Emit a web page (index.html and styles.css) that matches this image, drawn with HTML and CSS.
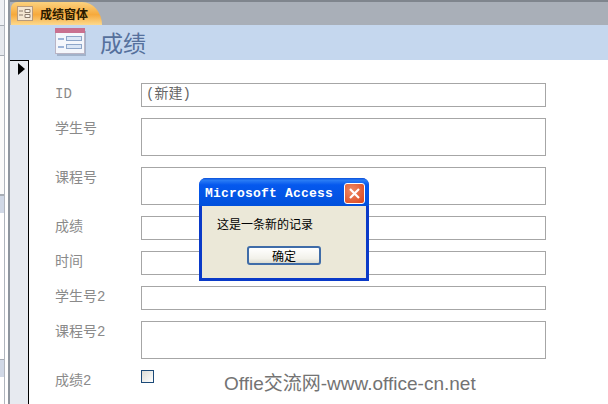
FILE: index.html
```html
<!DOCTYPE html>
<html lang="zh">
  <head>
    <meta charset="UTF-8" />
    <title>成绩窗体</title>
    <link rel="stylesheet" href="styles.css">
  </head>
  <body>
    <div class="nav-strip">
      <div class="nav-blocks">
        <div class="nav-block nav-a"></div>
        <div class="nav-block nav-b"></div>
        <div class="nav-block nav-c"></div>
        <div class="nav-block nav-d"></div>
        <div class="nav-block nav-e"></div>
        <div class="nav-block nav-d"></div>
        <div class="nav-block nav-f"></div>
      </div>
    </div>
    <div class="main">
      <div class="tab-bar">
        <div class="tab">
          <svg class="tab-icon" width="16" height="15" viewBox="0 0 16 15">
            <rect x="0.5" y="0.5" width="15" height="14" fill="#f3e6d2" stroke="#b89a7c" />
            <path d="M2 5h4M2 9h4" stroke="#8a7a6c" />
            <path d="M8 3.500h5v3h-5zM8 8.500h5v3h-5z" fill="#f8f1e6" stroke="#8a7a6c" />
          </svg>
          <span>成绩窗体</span>
        </div>
      </div>
      <div class="form-header">
        <svg class="form-icon" width="32" height="28" viewBox="0 0 32 28">
          <rect x="2" y="3" width="29" height="25" fill="#7f8ea5" opacity="0.5" />
          <rect x="0.500" y="0.500" width="29" height="25" fill="#f4f6fb" stroke="#b9b4c4" />
          <rect x="0" y="0" width="30" height="5" fill="#c9708f" />
          <path d="M3 11h6M3 19h6" stroke="#9db4d8" stroke-width="2" />
          <rect x="11.500" y="8.500" width="15" height="4" fill="#dbe6f5" stroke="#8ea6c9" />
          <rect x="11.500" y="16.500" width="15" height="4" fill="#dbe6f5" stroke="#8ea6c9" />
        </svg>
        <span class="form-title">成绩</span>
      </div>
      <div class="form-body">
        <div class="selector"><span class="arrow"></span></div>
        <div class="fields">
          <label class="row-label">ID</label>
          <div class="field h-short field-new">(新建)</div>
          <label class="row-label">学生号</label>
          <div class="field h-tall"></div>
          <label class="row-label">课程号</label>
          <div class="field h-tall"></div>
          <label class="row-label">成绩</label>
          <div class="field h-short"></div>
          <label class="row-label">时间</label>
          <div class="field h-short"></div>
          <label class="row-label">学生号2</label>
          <div class="field h-short"></div>
          <label class="row-label">课程号2</label>
          <div class="field h-tall"></div>
          <label class="row-label">成绩2</label>
          <div class="check"></div>
        </div>
      </div>
    </div>

    <div class="dialog">
      <div class="dialog-title">
        <span>Microsoft Access</span>
        <div class="close-btn">
          <svg width="13" height="13" viewBox="0 0 13 13">
            <path d="M2 2l9 9M11 2l-9 9" stroke="#fff" stroke-width="2.200" />
          </svg>
        </div>
      </div>
      <div class="dialog-body">
        <p>这是一条新的记录</p>
        <button class="ok-btn">确定</button>
      </div>
    </div>

    <div class="watermark">Offie交流网-www.office-cn.net</div>
  </body>
</html>
```

FILE: styles.css
```css
* {
  margin: 0;
  padding: 0;
  box-sizing: border-box;
}

body {
  width: 608px;
  height: 404px;
  overflow: hidden;
  position: relative;
  display: flex;
  background: #fff;
  font-family: "Noto Sans CJK SC", "Liberation Sans", sans-serif;
}

.nav-strip {
  width: 10px;
  height: 404px;
  background: #fff;
  border-right: 2px solid #8f969f;
}

.nav-blocks {
  width: 5px;
  height: 100%;
  display: flex;
  flex-direction: column;
  border-right: 1px solid #b0b5bd;
}

.nav-block {
  border-bottom: 1px solid #a7adb5;
}

.nav-a {
  height: 26px;
  background: #eef0f4;
}

.nav-b {
  height: 30px;
  background: #e6e9ee;
}

.nav-c {
  height: 139px;
  background: #fafafa;
}

.nav-d {
  height: 18px;
  background: #d0d8e6;
  border-top: 1px solid #a7adb5;
  border-bottom: 0;
}

.nav-e {
  height: 146px;
  background: #fff;
  border-bottom: 0;
}

.nav-f {
  flex: 1;
  background: #fff;
  border-bottom: 0;
}

.main {
  flex: 1;
  display: flex;
  flex-direction: column;
  min-width: 0;
}

.tab-bar {
  height: 25px;
  background: #a9afb8;
  border-top: 2px solid #7f858d;
  display: flex;
  align-items: flex-end;
}

.tab {
  width: 91px;
  height: 23px;
  margin-left: 1px;
  padding-left: 6px;
  display: flex;
  align-items: center;
  gap: 7px;
  font-size: 12px;
  font-weight: 700;
  color: #2a1a00;
  background: linear-gradient(#fbd27f, #f6a93c 55%, #fcd98e);
  border-radius: 6px 20px 0 0 / 6px 23px 0 0;
}

.form-header {
  height: 35px;
  background: #c5d7ee;
  display: flex;
  align-items: center;
  padding: 0 0 2px 45px;
}

.form-title {
  margin-left: 13px;
  font-size: 23px;
  line-height: 30px;
  color: #55709c;
}

.form-body {
  flex: 1;
  display: flex;
  min-height: 0;
}

.selector {
  width: 19px;
  background: #e7eaf0;
  border-top: 1px solid #000;
  border-right: 1px solid #000;
  padding: 2px 0 0 8px;
}

.arrow {
  display: block;
  width: 0;
  height: 0;
  border-left: 7px solid #000;
  border-top: 6px solid transparent;
  border-bottom: 6px solid transparent;
}

.fields {
  padding: 23px 0 0 26px;
  display: grid;
  grid-template-columns: 86px 405px;
  row-gap: 11px;
  align-content: start;
}

.row-label {
  padding-top: 2px;
  font-family: "Liberation Mono", "Noto Sans CJK SC", monospace;
  font-size: 14px;
  line-height: 19px;
  color: #8a8a8a;
}

.field {
  border: 1px solid #a6a6a6;
  background: #fff;
}

.field-new {
  font-family: "Liberation Mono", "Noto Sans CJK SC", monospace;
  font-size: 14px;
  line-height: 21px;
  padding-left: 4px;
  color: #666;
}

.h-short {
  height: 24px;
}

.h-tall {
  height: 38px;
}

.check {
  width: 13px;
  height: 13px;
  border: 1px solid #1c4a78;
  background: linear-gradient(135deg, #dcdcd6, #fff);
}

.dialog {
  position: absolute;
  left: 199px;
  top: 178px;
  width: 170px;
  height: 103px;
  background: #0a3ac8;
  border-radius: 7px 7px 0 0;
  padding: 0 3px 3px;
  display: flex;
  flex-direction: column;
}

.dialog-title {
  height: 28px;
  flex-shrink: 0;
  margin: 0 -3px;
  display: flex;
  align-items: center;
  justify-content: space-between;
  padding: 2px 4px 0 6px;
  border-radius: 7px 7px 0 0;
  background: linear-gradient(#0a4fd8, #2a7cf5 8%, #0558ee 25%, #0050dc);
  color: #fff;
  font-family: "Liberation Mono", monospace;
  font-size: 13px;
  letter-spacing: 0.2px;
  font-weight: 700;
  white-space: nowrap;
}

.close-btn {
  width: 21px;
  height: 21px;
  border: 1px solid #fff;
  border-radius: 3px;
  background: radial-gradient(circle at 35% 35%, #ee8a66, #d9431a);
  display: flex;
  align-items: center;
  justify-content: center;
}

.dialog-body {
  flex: 1;
  background: #ebe8d8;
  display: flex;
  flex-direction: column;
  align-items: center;
}

.dialog-body p {
  align-self: flex-start;
  margin: 9px 0 0 15px;
  font-size: 12px;
  line-height: 17px;
  color: #000;
}

.ok-btn {
  margin-top: 14px;
  width: 74px;
  height: 19px;
  font-family: inherit;
  font-size: 12px;
  line-height: 15px;
  color: #000;
  background: linear-gradient(#fff, #f2f1ea 70%, #dcdcd0);
  border: 2px solid #3f6ca8;
  border-radius: 3px;
}

.watermark {
  position: absolute;
  left: 224px;
  top: 373px;
  font-family: "Liberation Sans", "Noto Sans CJK SC", sans-serif;
  font-size: 19px;
  line-height: 22px;
  color: #737373;
  white-space: nowrap;
}
```
